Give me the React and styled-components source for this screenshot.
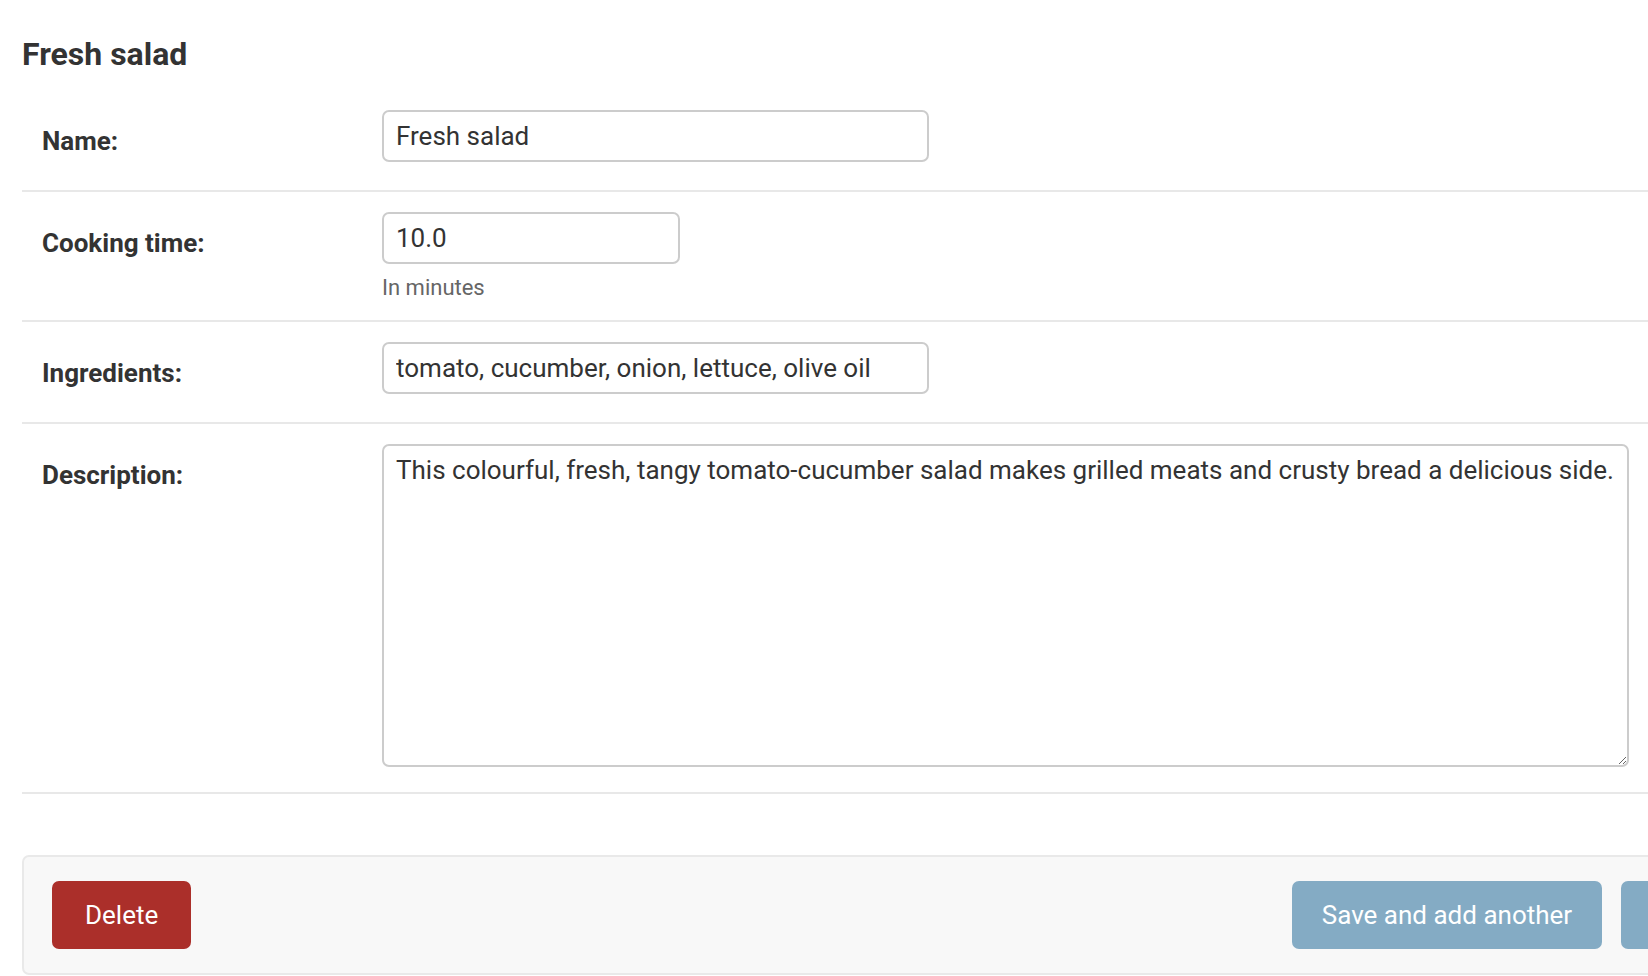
import React from 'react'
import styled, { createGlobalStyle } from 'styled-components'

const GlobalStyle = createGlobalStyle`
html, body {
  margin: 0;
  padding: 0;
  background: #fff;
  overflow: hidden;
}
body {
  font-family: Roboto, "Liberation Sans", sans-serif;
  color: #333;
}
`

// the change form is wider than the window, so the submit row runs off the right edge
const Page = styled.div`
width: 2129px;
padding: 35px 0 0 22px;
`

const Title = styled.h2`
margin: 0 0 17px 0;
font-size: 32px;
line-height: 38px;
font-weight: 700;
color: #333;
`

const Row = styled.div`
display: flex;
align-items: flex-start;
padding: 20px 18px 18px 20px;
border-bottom: 2px solid #e8e8e8;
`

const Label = styled.label`
box-sizing: border-box;
flex-shrink: 0;
width: 340px;
padding-top: 15px;
font-size: 26px;
line-height: 32px;
font-weight: 700;
color: #333;
`

const Field = styled.div`
display: flex;
flex-direction: column;
align-items: flex-start;
`

const TextInput = styled.input`
box-sizing: border-box;
width: ${p => p.$width}px;
height: 52px;
margin: 0 0 10px 0;
padding: 0 12px;
border: 2px solid #ccc;
border-radius: 7px;
font-family: Roboto, "Liberation Sans", sans-serif;
font-size: 26px;
color: #333;
background: #fff;
outline: none;
`

const TextArea = styled.textarea`
box-sizing: border-box;
width: 1247px;
height: 323px;
margin: 0 0 7px 0;
padding: 9px 12px 8px;
border: 2px solid #ccc;
border-radius: 7px;
font-family: Roboto, "Liberation Sans", sans-serif;
font-size: 26px;
line-height: normal;
color: #333;
background: #fff;
outline: none;
`

const Help = styled.div`
font-size: 22px;
line-height: 28px;
color: #666;
`

const SubmitRow = styled.div`
display: flex;
align-items: center;
margin-top: 61px;
padding: 24px 28px;
background: #f8f8f8;
border: 2px solid #e9e9e9;
border-radius: 7px;
`

const Actions = styled.div`
display: flex;
gap: 19px;
margin-left: auto;
`

const colors = {
  delete: '#ab2f2a',
  secondary: '#84abc4',
  primary: '#417690',
}

const Button = styled.button`
height: 68px;
padding: 0 ${p => (p.$variant === 'delete' ? 33 : 30)}px;
border: none;
border-radius: 7px;
background: ${p => colors[p.$variant]};
color: #fff;
font-family: Roboto, "Liberation Sans", sans-serif;
font-size: 26px;
font-weight: ${p => (p.$variant === 'primary' ? 700 : 400)};
text-transform: ${p => (p.$variant === 'primary' ? 'uppercase' : 'none')};
cursor: pointer;
`

const App = () => {
  return (
    <>
      <GlobalStyle />
      <Page>
        <Title>Fresh salad</Title>

        <Row>
          <Label>Name:</Label>
          <Field>
            <TextInput $width={547} defaultValue="Fresh salad" />
          </Field>
        </Row>

        <Row>
          <Label>Cooking time:</Label>
          <Field>
            <TextInput $width={298} defaultValue="10.0" />
            <Help>In minutes</Help>
          </Field>
        </Row>

        <Row>
          <Label>Ingredients:</Label>
          <Field>
            <TextInput $width={547} defaultValue="tomato, cucumber, onion, lettuce, olive oil" />
          </Field>
        </Row>

        <Row>
          <Label>Description:</Label>
          <Field>
            <TextArea defaultValue="This colourful, fresh, tangy tomato-cucumber salad makes grilled meats and crusty bread a delicious side." />
          </Field>
        </Row>

        <SubmitRow>
          <Button $variant="delete">Delete</Button>
          <Actions>
            <Button $variant="secondary">Save and add another</Button>
            <Button $variant="secondary">Save and continue editing</Button>
            <Button $variant="primary">Save</Button>
          </Actions>
        </SubmitRow>
      </Page>
    </>
  )
}

export default App
